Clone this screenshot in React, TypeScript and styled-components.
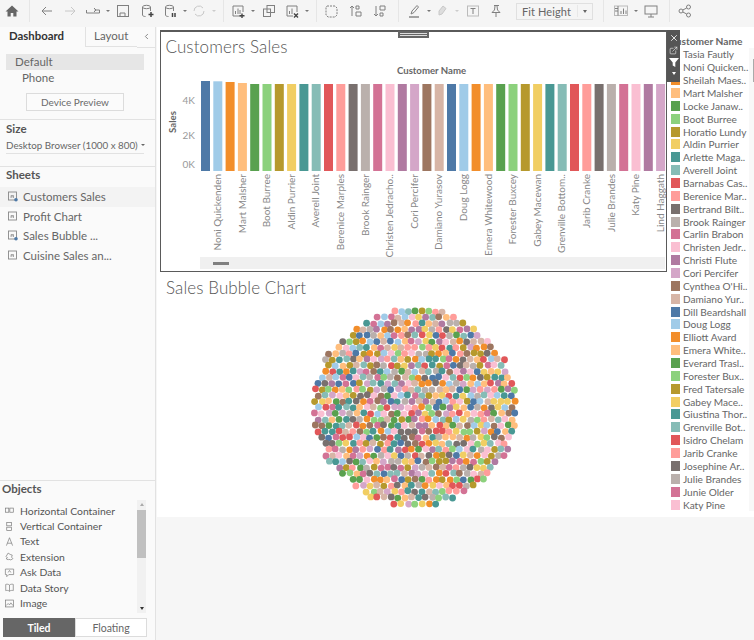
import React, { ReactNode } from 'react';
import styled, { createGlobalStyle } from 'styled-components';
import { X, ExternalLink, ChevronLeft } from 'lucide-react';

const GlobalStyle = createGlobalStyle`
    html, body {
        margin: 0;
        padding: 0;
        background: #f6f6f6;
        font-family: Lato, "Open Sans", sans-serif;
    }
`;

const palette = [
    '#4e79a7', '#a0cbe8', '#f28e2b', '#ffbe7d', '#59a14f', '#8cd17d', '#b6992d', '#f1ce63', '#499894', '#86bcb6',
    '#e15759', '#ff9d9a', '#79706e', '#bab0ac', '#d37295', '#fabfd2', '#b07aa1', '#d4a6c8', '#9d7660', '#d7b5a6',
];

const legendNames = [
    'Tasia Fautly', 'Noni Quicken..', 'Sheilah Maes..', 'Mart Malsher', 'Locke Janaw..', 'Boot Burree', 'Horatio Lundy',
    'Aldin Purrier', 'Arlette Maga..', 'Averell Joint', 'Barnabas Cas..', 'Berenice Mar..', 'Bertrand Bilt..',
    'Brook Rainger', 'Carlin Brabon', 'Christen Jedr..', 'Christi Flute', 'Cori Percifer', "Cynthea O'Hi..",
    'Damiano Yur..', 'Dill Beardshall', 'Doug Logg', 'Elliott Avard', 'Emera White..', 'Everard Trasl..',
    'Forester Bux..', 'Fred Tatersale', 'Gabey Mace..', 'Giustina Thor..', 'Grenville Bot..', 'Isidro Chelam',
    'Jarib Cranke', 'Josephine Ar..', 'Julie Brandes', 'Junie Older', 'Katy Pine',
];

const axisNames = [
    'Noni Quickenden', 'Mart Malsher', 'Boot Burree', 'Aldin Purrier', 'Averell Joint', 'Berenice Marples',
    'Brook Rainger', 'Christen Jedracho..', 'Cori Percifer', 'Damiano Yurasov', 'Doug Logg', 'Emera Whitewood',
    'Forester Buxcey', 'Gabey Macewan', 'Grenville Bottom..', 'Jarib Cranke', 'Julie Brandes', 'Katy Pine', 'Lind Haggath',
];

const barTops = [81, 81.3, 82, 83];

const Page = styled.div`
    width: 754px;
    height: 640px;
    display: flex;
    flex-direction: column;
    overflow: hidden;
    background: #f6f6f6;
    color: #666;
`;

const Toolbar = styled.div`
    height: 27px;
    flex: none;
    display: flex;
    align-items: center;
    box-sizing: border-box;
    padding-bottom: 5px;
    background: #f5f5f5;
`;

const Slot = styled.div<{ $w: number; $ml?: number; $faded?: boolean }>`
    width: ${(p) => p.$w}px;
    margin-left: ${(p) => p.$ml ?? 0}px;
    height: 22px;
    flex: none;
    display: flex;
    align-items: center;
    justify-content: center;
    color: ${(p) => (p.$faded ? '#c8c8c8' : '#808080')};
`;

const ToolDot = styled.div<{ $w?: number; $faded?: boolean }>`
    width: ${(p) => p.$w ?? 7}px;
    flex: none;
    display: flex;
    justify-content: center;
    &::after {
        content: '';
        border-left: 2px solid transparent;
        border-right: 2px solid transparent;
        border-top: 2px solid ${(p) => (p.$faded ? '#ccc' : '#777')};
    }
`;

const Sep = styled.div<{ $ml: number; $mr: number }>`
    width: 1px;
    height: 22px;
    flex: none;
    margin: 0 ${(p) => p.$mr}px 0 ${(p) => p.$ml}px;
    background: #e6e6e6;
`;

const FitSelect = styled.div`
    width: 77px;
    height: 17px;
    margin-left: 9px;
    flex: none;
    display: flex;
    align-items: center;
    box-sizing: border-box;
    border: 1px solid #e0e0e0;
    font-size: 11px;
    letter-spacing: 0.1px;
    color: #666;
`;

const FitLabel = styled.span`
    flex: 1;
    padding-left: 5px;
`;

const FitArrow = styled.span`
    width: 14px;
    height: 12px;
    display: flex;
    align-items: center;
    justify-content: center;
    border-left: 1px solid #e8e8e8;
    &::after {
        content: '';
        border-left: 2.5px solid transparent;
        border-right: 2.5px solid transparent;
        border-top: 3px solid #666;
    }
`;

const Body = styled.div`
    flex: 1;
    display: flex;
    min-height: 0;
`;

const Sidebar = styled.aside`
    width: 156px;
    flex: none;
    display: flex;
    flex-direction: column;
    box-sizing: border-box;
    background: #fafafa;
    border-right: 1px solid #e2e2e2;
`;

const Tabs = styled.div`
    height: 20px;
    display: flex;
    align-items: center;
`;

const Tab = styled.div<{ $active?: boolean }>`
    box-sizing: border-box;
    height: 20px;
    width: ${(p) => (p.$active ? 85 : 52)}px;
    padding-left: ${(p) => (p.$active ? 9 : 8)}px;
    line-height: 18px;
    font-size: ${(p) => (p.$active ? 11.4 : 11.5)}px;
    font-weight: ${(p) => (p.$active ? 700 : 400)};
    color: ${(p) => (p.$active ? '#333' : '#666')};
    border-left: ${(p) => (p.$active ? 'none' : '1px solid #e2e2e2')};
    border-bottom: ${(p) => (p.$active ? 'none' : '1px solid #e2e2e2')};
`;

const Collapse = styled.div`
    flex: 1;
    height: 20px;
    display: flex;
    align-items: center;
    justify-content: center;
    color: #666;
    border-bottom: 1px solid #e2e2e2;
`;

const DeviceList = styled.div`
    padding: 7px 11px 8px 6px;
    border-bottom: 1px solid #e2e2e2;
    display: flex;
    flex-direction: column;
`;

const DeviceRow = styled.div<{ $selected?: boolean }>`
    height: 16px;
    line-height: 16px;
    font-size: 11.5px;
    color: #666;
    padding-left: ${(p) => (p.$selected ? 9 : 16)}px;
    background: ${(p) => (p.$selected ? '#e6e6e6' : 'transparent')};
`;

const PreviewButton = styled.div`
    box-sizing: border-box;
    width: 98px;
    height: 18px;
    margin: 7px 0 0 20px;
    border: 1px solid #dcdcdc;
    background: #fbfbfb;
    text-align: center;
    line-height: 16px;
    font-size: 10px;
    color: #6a6a6a;
`;

const SectionTitle = styled.div`
    font-size: 11.5px;
    font-weight: 700;
    color: #555;
    line-height: 14px;
`;

const SizeSection = styled.div`
    padding: 2px 11px 12px 6px;
    border-bottom: 1px solid #e2e2e2;
`;

const SizeSelect = styled.div`
    margin-top: 1px;
    height: 17px;
    line-height: 16px;
    box-sizing: border-box;
    font-size: 9.8px;
    color: #666;
    border-bottom: 1px solid #e2e2e2;
    white-space: nowrap;
    display: flex;
    align-items: center;
    gap: 3px;
    &::after {
        content: '';
        border-left: 2px solid transparent;
        border-right: 2px solid transparent;
        border-top: 2.500px solid #666;
    }
`;

const SheetsHead = styled.div`
    padding: 1px 6px 5px;
`;

const SheetRow = styled.div<{ $active?: boolean }>`
    height: 19.5px;
    display: flex;
    align-items: center;
    gap: 5px;
    padding-left: 8px;
    font-size: 11.5px;
    color: #666;
    background: ${(p) => (p.$active ? '#f3f3f3' : 'transparent')};
`;

const ObjectsPanel = styled.div`
    margin-top: auto;
    height: 160px;
    box-sizing: border-box;
    border-top: 1px solid #e2e2e2;
    padding: 1px 8px 0 2px;
    display: flex;
    flex-direction: column;
`;

const ObjectsBody = styled.div`
    display: flex;
    margin-top: 4px;
    height: 113px;
`;

const ObjectsList = styled.div`
    flex: 1;
    padding-top: 3px;
`;

const ObjectRow = styled.div`
    height: 15.4px;
    display: flex;
    align-items: center;
    gap: 5px;
    padding-left: 2px;
    font-size: 10.4px;
    color: #555;
    white-space: nowrap;
`;

const ObjectGlyph = styled.span`
    display: flex;
    color: #777;
`;

const Scroll = styled.div`
    width: 9px;
    margin-right: 1px;
    background: #f1f1f1;
    position: relative;
`;

const ScrollThumb = styled.div`
    position: absolute;
    left: 0;
    right: 0;
    top: 10px;
    height: 48px;
    background: #c0c0c0;
`;

const ScrollArrow = styled.div<{ $down?: boolean }>`
    position: absolute;
    left: 2.5px;
    ${(p) => (p.$down ? 'bottom: 3px;' : 'top: 3px;')}
    border-left: 2px solid transparent;
    border-right: 2px solid transparent;
    ${(p) => (p.$down ? 'border-top: 3px solid #333;' : 'border-bottom: 3px solid #aaa;')}
`;

const ModeRow = styled.div`
    display: flex;
    height: 19px;
    margin: 5px 0 0 1px;
`;

const ModeButton = styled.div<{ $on?: boolean }>`
    width: 72px;
    box-sizing: border-box;
    text-align: center;
    line-height: 18px;
    font-size: 10.5px;
    font-weight: ${(p) => (p.$on ? 700 : 400)};
    color: ${(p) => (p.$on ? '#fff' : '#666')};
    background: ${(p) => (p.$on ? '#666' : '#fff')};
    border: 1px solid ${(p) => (p.$on ? '#666' : '#dcdcdc')};
`;

const Main = styled.main`
    flex: 1;
    min-width: 0;
`;

const Canvas = styled.div`
    width: 597px;
    height: 490px;
    margin-left: 1px;
    background: #fff;
    display: flex;
`;

const Dashboard = styled.div`
    width: 510px;
    flex: none;
    padding: 3px 0 0 3px;
    box-sizing: border-box;
    display: flex;
    flex-direction: column;
`;

const SheetBox = styled.section`
    position: relative;
    width: 507px;
    height: 242px;
    flex: none;
    box-sizing: border-box;
    border: 2px solid #5a5a5a;
    border-width: 2px 1.5px 1.5px 1.5px;
`;

const SheetTitle = styled.h2<{ $bubble?: boolean }>`
    margin: 0;
    height: 30px;
    line-height: 29px;
    padding-left: ${(p) => (p.$bubble ? 6 : 4.5)}px;
    font-size: 17px;
    font-weight: 300;
    letter-spacing: 0.1px;
    color: #555;
`;

const BubbleHead = styled.div`
    padding-top: 1px;
`;

const ChartSvg = styled.svg`
    display: block;
    overflow: visible;
`;

const ChartScroll = styled.div`
    height: 12px;
    margin-left: 38.5px;
    width: 465px;
    background: #f0f0f0;
    display: flex;
    align-items: center;
    padding-left: 13px;
    box-sizing: border-box;
`;

const ChartThumb = styled.div`
    width: 16px;
    height: 3px;
    background: #808080;
`;

const Grip = styled.div`
    position: absolute;
    top: -1px;
    left: 237px;
    width: 31px;
    height: 7px;
    box-sizing: border-box;
    background: #666;
    display: flex;
    flex-direction: column;
    justify-content: center;
    gap: 1px;
    padding: 0 2px;
    &::before, &::after {
        content: '';
        height: 1px;
        background: #ddd;
    }
`;

const FloatControls = styled.div`
    position: absolute;
    top: -2px;
    right: -14px;
    width: 13px;
    height: 52px;
    background: #555;
    color: #fff;
    display: flex;
    flex-direction: column;
    align-items: center;
    padding-top: 3px;
    box-sizing: border-box;
    gap: 3px;
    z-index: 2;
`;

const FloatCaret = styled.div`
    margin-top: 2px;
    border-left: 2.5px solid transparent;
    border-right: 2.5px solid transparent;
    border-top: 3px solid #fff;
`;

const BubbleWrap = styled.div`
    display: flex;
    justify-content: center;
    padding-left: 2px;
`;

const Legend = styled.aside`
    width: 82px;
    flex: none;
    padding-top: 7px;
    display: flex;
    flex-direction: column;
`;

const LegendTitle = styled.div`
    height: 14px;
    line-height: 14px;
    font-size: 10.2px;
    font-weight: 700;
    color: #666;
    padding-left: 2px;
    white-space: nowrap;
`;

const LegendRow = styled.div`
    height: 12.87px;
    flex: none;
    display: flex;
    align-items: center;
    gap: 3px;
    padding-left: 4px;
    font-size: 10.1px;
    color: #666;
    white-space: nowrap;
`;

const Swatch = styled.span<{ $color: string }>`
    width: 9px;
    height: 10px;
    flex: none;
    background: ${(p) => p.$color};
`;

const LegendScroll = styled.div`
    width: 5px;
    flex: none;
    margin: 21px 0 6px;
    background: #f8f8f8;
    display: flex;
    justify-content: flex-end;
    align-items: flex-start;
    padding-top: 11px;
    box-sizing: border-box;
    &::after {
        content: '';
        width: 1px;
        height: 23px;
        background: #aaa;
    }
`;

const Glyph = ({ children, size = 16 }: { children: ReactNode; size?: number }) => (
    <svg width={size} height={size} viewBox="0 0 16 16" fill="none" stroke="currentColor" strokeWidth="1">
        {children}
    </svg>
);

const SheetIcon = ({ linked }: { linked?: boolean }) => (
    <svg width="10" height="11" viewBox="0 0 10 11" fill="none" stroke="#888" strokeWidth="0.9" style={{ flex: 'none' }}>
        <rect x="0.5" y="1" width="8" height="8" />
        <path d="M3 7V4.5h2.5V7M3 5.8h2.5" strokeWidth="0.7" />
        {linked && <circle cx="8" cy="8.8" r="1.8" fill="#4e79a7" stroke="none" />}
    </svg>
);

const objectIcons: Record<string, ReactNode> = {
    'Horizontal Container': <><rect x="2" y="4.5" width="5" height="6" /><rect x="8.5" y="4.5" width="5" height="6" /></>,
    'Vertical Container': <><rect x="4" y="2" width="7" height="5" /><rect x="4" y="9" width="7" height="5" /></>,
    Text: <path d="M3.5 14L8 2.5 12.5 14M5 10.5h6" />,
    Extension: <path d="M3 8l3-5 3 2 3 1-1 3 2 2-3 2-3-1-1 1-3-2 2-1z" />,
    'Ask Data': <><path d="M2 3h12v8H7l-3 3v-3H2z" /><path d="M6 8l2-3 2 3" /></>,
    'Data Story': <path d="M8 4.5C6.5 3 4 3 2.5 3.5v9C4 12 6.5 12 8 13.5c1.500-1.500 4-1.500 5.500-1v-9C12 3 9.500 3 8 4.500zM8 4.500v9" />,
    Image: <><rect x="2" y="3" width="12" height="10" /><path d="M3 11l3-3 2 2 2-3 3 4" /></>,
};

const BarChart = () => (
    <ChartSvg width="503" height="195" viewBox="162 62 503 195">
        <text x="432.5" y="74" textAnchor="middle" fontSize="9.600" fontWeight="700" fill="#666">Customer Name</text>
        <text transform="rotate(-90 177 122)" x="177" y="122" textAnchor="middle" fontSize="9.600" fontWeight="700" fill="#666">Sales</text>
        {[['4K', 104], ['2K', 139], ['0K', 168]].map(([label, y]) => (
            <text key={label} x="196" y={y} textAnchor="end" fontSize="10" fill="#999">{label}</text>
        ))}
        {Array.from({ length: 38 }, (_, i) => {
            const top = barTops[i] ?? 84;
            return <rect key={i} x={202 + i * 12.3} y={top} width="9" height={171 - top} fill={palette[i % 20]} />;
        })}
        {axisNames.map((name, i) => {
            const x = 222 + i * 24.6;
            return (
                <text key={name} transform={`rotate(-90 ${x} 174)`} x={x} y="174" textAnchor="end" fontSize="10" fill="#888">
                    {name}
                </text>
            );
        })}
    </ChartSvg>
);

// hex packed blob, seeded so the picture stays the same between runs
const bubbles = (() => {
    let seed = 48271;
    const rnd = () => {
        seed = (seed * 16807) % 2147483647;
        return seed / 2147483647;
    };
    const list: { x: number; y: number; color: string }[] = [];
    const cx = 107;
    const cy = 104.5;
    for (let row = -18; row <= 18; row++) {
        for (let col = -16; col <= 16; col++) {
            const x = cx + (col + (row % 2 ? 0.5 : 0)) * 6.9 + (rnd() - 0.5) * 1.5;
            const y = cy + row * 6 + (rnd() - 0.5) * 1.5;
            const dx = Math.abs(x - cx);
            const dy = Math.abs(y - cy);
            if (Math.hypot(dx, dy * 1.04) < 103 && dx + dy < 140) {
                list.push({ x, y, color: palette[Math.floor(rnd() * 20)] });
            }
        }
    }
    return list;
})();

const BubbleChart = () => (
    <ChartSvg width="214" height="212" viewBox="0 0 214 212">
        {bubbles.map((b, i) => (
            <circle key={i} cx={b.x} cy={b.y} r="3.4" fill={b.color} />
        ))}
    </ChartSvg>
);

const App = () => {
    return (
        <Page>
            <GlobalStyle />
            <Toolbar>
                <Slot $w={18} $ml={3}>
                    <Glyph><path d="M8 2.500L1.500 8.500h2v5h3.200v-3.500h2.600v3.500h3.200v-5h2z" fill="#666" stroke="none" /></Glyph>
                </Slot>
                <Sep $ml={8} $mr={5} />
                <Slot $w={23}><Glyph><path d="M13 8H3M7 4L3 8l4 4" /></Glyph></Slot>
                <Slot $w={23} $faded><Glyph><path d="M3 8h10M9 4l4 4-4 4" /></Glyph></Slot>
                <Slot $w={23}><Glyph><path d="M1.500 7v3h13V7h-5M9 5l2 2-2 2" /></Glyph></Slot>
                <ToolDot />
                <Slot $w={24}><Glyph><rect x="2.500" y="2.500" width="11" height="11" /><path d="M5 13v-3h5v3" /></Glyph></Slot>
                <Slot $w={24}><Glyph><path d="M3.500 4v8c0 1 1.500 1.500 3 1.500M11.500 4v4" /><ellipse cx="7.500" cy="4" rx="4" ry="1.700" /><path d="M12 9v5M9.500 11.500h5" strokeWidth="1.500" stroke="#444" /></Glyph></Slot>
                <Slot $w={22}><Glyph><path d="M3.500 4v8c0 1 1.500 1.500 3 1.500M11.500 4v4" /><ellipse cx="7.500" cy="4" rx="4" ry="1.700" /><path d="M10.500 10v4M13 10v4" strokeWidth="1.500" stroke="#444" /></Glyph></Slot>
                <ToolDot />
                <Slot $w={22} $faded><Glyph><path d="M13 8a5 5 0 0 1-9 3M3 8a5 5 0 0 1 9-3" /></Glyph></Slot>
                <ToolDot $w={8} $faded />
                <Sep $ml={5} $mr={3} />
                <Slot $w={22}><Glyph><path d="M11 13H3V3h10v6" /><path d="M5.500 11V8M8 11V5.500M10 11V7" /><path d="M12 10.500v4.500M9.500 12.700h5" stroke="#444" strokeWidth="1.400" /></Glyph></Slot>
                <ToolDot $w={8} />
                <Slot $w={22} $ml={1}><Glyph><rect x="2.500" y="6" width="7" height="7.500" /><rect x="6" y="2.500" width="7.500" height="7" /></Glyph></Slot>
                <Slot $w={22} $ml={1}><Glyph><path d="M9 13H3V3h10v6" /><path d="M5.500 11V8M8 11V5.500" /><path d="M10 10.500l4 4M14 10.500l-4 4" stroke="#444" strokeWidth="1.400" /></Glyph></Slot>
                <ToolDot />
                <Sep $ml={6} $mr={3} />
                <Slot $w={22}><Glyph><path d="M4 3h8l2 2v7l-2 2H5l-2-2V4z" strokeDasharray="2 1" /></Glyph></Slot>
                <Slot $w={22} $ml={3}><Glyph><path d="M4 3v10M2 5l2-2 2 2M8 3h3v3H8zM8 9h5v4H8z" /></Glyph></Slot>
                <Slot $w={22} $ml={2}><Glyph><path d="M4 3v10M2 11l2 2 2-2M8 3h5v4H8zM8 10h3v3H8z" /></Glyph></Slot>
                <Sep $ml={7} $mr={4} />
                <Slot $w={22}><Glyph><path d="M5 11l1-3 5-5.500 1.500 1.500L8 9.500z" /><path d="M3 14h10" strokeWidth="1.400" /></Glyph></Slot>
                <ToolDot />
                <Slot $w={22} $ml={-1} $faded><Glyph><path d="M5 8l4-5 3 2.500-4 5.500-3 1z" fill="#ddd" /></Glyph></Slot>
                <ToolDot $faded />
                <Slot $w={22} $ml={2}><Glyph><rect x="2.500" y="3" width="11" height="10" stroke="#bbb" /><path d="M5.500 5.500h5M8 5.500v5.500" /></Glyph></Slot>
                <Slot $w={23}><Glyph><path d="M6 2.500h5M7 3l-.5 4L4 9.500h8L9.500 7 9 3M8 9.500v4.500" /></Glyph></Slot>
                <FitSelect>
                    <FitLabel>Fit Height</FitLabel>
                    <FitArrow />
                </FitSelect>
                <Sep $ml={10} $mr={6} />
                <Slot $w={22}><Glyph><rect x="1.500" y="3" width="13" height="9.500" stroke="#bbb" /><path d="M5 3v9.500M2 5.500h3M2 8h3M8 11V8M10.500 11V5.500M13 11V7.500" /></Glyph></Slot>
                <ToolDot />
                <Slot $w={22} $ml={1}><Glyph><rect x="2" y="3" width="12" height="8" /><path d="M8 11v3M5 14h6" /></Glyph></Slot>
                <Sep $ml={7} $mr={4} />
                <Slot $w={22}>
                    <Glyph><circle cx="4" cy="8" r="2" /><circle cx="11.500" cy="4" r="2" /><circle cx="11.500" cy="12" r="2" /><path d="M5.800 7l3.900-2M5.800 9l3.900 2" /></Glyph>
                </Slot>
            </Toolbar>
            <Body>
                <Sidebar>
                    <Tabs>
                        <Tab $active>Dashboard</Tab>
                        <Tab>Layout</Tab>
                        <Collapse><ChevronLeft size={9} strokeWidth={2} /></Collapse>
                    </Tabs>
                    <DeviceList>
                        <DeviceRow $selected>Default</DeviceRow>
                        <DeviceRow>Phone</DeviceRow>
                        <PreviewButton>Device Preview</PreviewButton>
                    </DeviceList>
                    <SizeSection>
                        <SectionTitle>Size</SectionTitle>
                        <SizeSelect>Desktop Browser (1000 x 800)</SizeSelect>
                    </SizeSection>
                    <SheetsHead><SectionTitle>Sheets</SectionTitle></SheetsHead>
                    <SheetRow $active><SheetIcon linked />Customers Sales</SheetRow>
                    <SheetRow><SheetIcon />Profit Chart</SheetRow>
                    <SheetRow><SheetIcon linked />Sales Bubble ...</SheetRow>
                    <SheetRow><SheetIcon />Cuisine Sales an...</SheetRow>
                    <ObjectsPanel>
                        <SectionTitle>Objects</SectionTitle>
                        <ObjectsBody>
                            <ObjectsList>
                                {Object.keys(objectIcons).map((name) => (
                                    <ObjectRow key={name}>
                                        <ObjectGlyph>
                                            <Glyph size={11}>{objectIcons[name]}</Glyph>
                                        </ObjectGlyph>
                                        {name}
                                    </ObjectRow>
                                ))}
                            </ObjectsList>
                            <Scroll>
                                <ScrollArrow />
                                <ScrollThumb />
                                <ScrollArrow $down />
                            </Scroll>
                        </ObjectsBody>
                        <ModeRow>
                            <ModeButton $on>Tiled</ModeButton>
                            <ModeButton>Floating</ModeButton>
                        </ModeRow>
                    </ObjectsPanel>
                </Sidebar>
                <Main>
                    <Canvas>
                        <Dashboard>
                            <SheetBox>
                                <Grip />
                                <FloatControls>
                                    <X size={10} strokeWidth={2} />
                                    <ExternalLink size={9} strokeWidth={1.5} />
                                    <svg width="10" height="9" viewBox="0 0 10 9"><path d="M0 0h10L6.300 4.500V9L3.700 7.500V4.500z" fill="#fff" /></svg>
                                    <FloatCaret />
                                </FloatControls>
                                <SheetTitle>Customers Sales</SheetTitle>
                                <BarChart />
                                <ChartScroll><ChartThumb /></ChartScroll>
                            </SheetBox>
                            <BubbleHead><SheetTitle $bubble>Sales Bubble Chart</SheetTitle></BubbleHead>
                            <BubbleWrap><BubbleChart /></BubbleWrap>
                        </Dashboard>
                        <Legend>
                            <LegendTitle>Customer Name</LegendTitle>
                            {legendNames.map((name, i) => (
                                <LegendRow key={name}>
                                    <Swatch $color={palette[i % 20]} />
                                    {name}
                                </LegendRow>
                            ))}
                        </Legend>
                        <LegendScroll />
                    </Canvas>
                </Main>
            </Body>
        </Page>
    );
};

export default App;
